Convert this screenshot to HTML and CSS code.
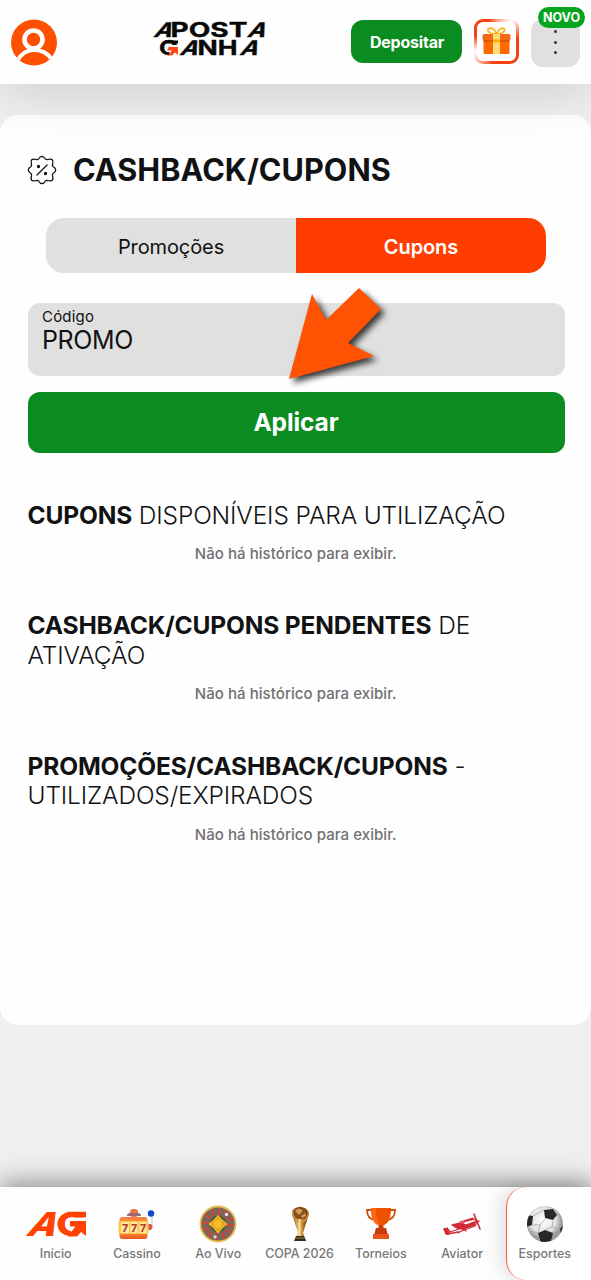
FILE: index.html
```html
<!DOCTYPE html>
<html lang="pt-BR">
<head>
<meta charset="utf-8">
<title>Cashback/Cupons</title>
<link rel="stylesheet" href="styles.css">
</head>
<body>
<div class="app">
  <header class="header">
    <svg class="avatar" viewBox="0 0 46 46" width="46" height="47">
      <defs><clipPath id="face"><circle cx="23" cy="23" r="23"/></clipPath></defs>
      <circle cx="23" cy="23" r="23" fill="#ff5000"/>
      <g clip-path="url(#face)" fill="none" stroke="#fff">
        <circle cx="22.5" cy="20" r="9" stroke-width="4.6"/>
        <path d="M6 42C13 27 32 27 41 40" stroke-width="4.2"/>
      </g>
    </svg>
    <svg class="brand" viewBox="0 0 114 38" width="114" height="38">
      <g font-family="Inter, sans-serif" font-weight="700" font-size="20" fill="#080808" stroke="#080808" stroke-width=".35">
        <text transform="matrix(1.2 0 -.46 1 1 16)">A</text>
        <text x="18.500" y="16" textLength="77" lengthAdjust="spacingAndGlyphs">POST</text>
        <text transform="matrix(1.2 0 -.46 1 94.5 16)">A</text>
        <text x="7" y="34.300" textLength="19" lengthAdjust="spacingAndGlyphs">G</text>
        <text transform="matrix(1.2 0 -.46 1 27 34.3)">A</text>
        <text x="45.500" y="34.300" textLength="40" lengthAdjust="spacingAndGlyphs">NH</text>
        <text transform="matrix(1.2 0 -.46 1 87 34.3)">A</text>
      </g>
      <path d="M17.500 24h8.500v12h-8.500z" fill="#fefefe"/>
      <path d="M13 19.500h13v3H13z" fill="#080808"/>
      <path d="M17 26h9v8l-3-2.500-3 3h-4l4-5h-5z" fill="#ff4a12"/>
    </svg>
    <div class="actions">
      <button class="deposit">Depositar</button>
      <div class="gift">
        <svg viewBox="0 0 39 39" width="39" height="39">
          <path d="M18.500 12C12 12 9 8 12 6.700S18 7 19.500 12C21 7 25 5.400 27 6.700S26 12 20.500 12" fill="none" stroke="#ffb31b" stroke-width="1.800"/>
          <rect x="6.500" y="16" width="26" height="16" rx="1.500" fill="#ff6a00"/>
          <rect x="5.500" y="12" width="28" height="6" rx="1.500" fill="#f36b14"/>
          <path d="M6.500 18h26v2h-26z" fill="#df5600"/>
          <path d="M16 12h7v20h-7z" fill="#ffdc78"/><path d="M16 17.500h7v3h-7z" fill="#ffb600"/>
        </svg>
      </div>
      <div class="more"><i></i><i></i><i></i><span class="novo">NOVO</span></div>
    </div>
  </header>

  <main class="card">
    <h1 class="title">
      <svg viewBox="0 0 30 30" width="30" height="30" fill="none" stroke="#111" stroke-width="1.300" stroke-linejoin="round" stroke-linecap="round">
        <path d="M15 1.300Q17 1.600 18.500 4Q19 4.800 20.500 4.500Q24 3.500 25.300 4.700Q26.500 6 25.500 9.500Q25.200 11 26 11.500Q28.700 13 28.700 15Q28.700 17 26 18.500Q25.200 19 25.500 20.500Q26.500 24 25.300 25.300Q24 26.500 20.500 25.500Q19 25.200 18.500 26Q17 28.700 15 28.700Q13 28.700 11.500 26Q11 25.200 9.500 25.500Q6 26.500 4.700 25.300Q3.500 24 4.500 20.500Q4.800 19 4 18.500Q1.300 17 1.300 15Q1.300 13 4 11.500Q4.800 11 4.500 9.500Q3.500 6 4.700 4.700Q6 3.500 9.500 4.500Q11 4.800 11.500 4Q13 1.300 15 1.300Z"/>
        <path d="M10 20l10-10"/><circle cx="11.500" cy="11.500" r="1" fill="#111"/><circle cx="18.500" cy="18.500" r="1" fill="#111"/>
      </svg>
      <span>CASHBACK/CUPONS</span>
    </h1>
    <div class="tabs"><button class="tab">Promoções</button><button class="tab active">Cupons</button></div>
    <div class="field">
      <label class="label">Código</label><div class="value">PROMO</div>
      <svg class="pointer" viewBox="0 0 110 110" width="110" height="110">
        <path d="M8 97L31 12 45 38 78 6 100 27 67 61 93 74Z" fill="#ff5203"/>
      </svg>
    </div>
    <button class="apply">Aplicar</button>
    <section class="group"><h2><b>CUPONS</b> DISPONÍVEIS PARA UTILIZAÇÃO</h2><p>Não há histórico para exibir.</p></section>
    <section class="group"><h2><b>CASHBACK/CUPONS PENDENTES</b> DE<br>ATIVAÇÃO</h2><p>Não há histórico para exibir.</p></section>
    <section class="group"><h2><b>PROMOÇÕES/CASHBACK/CUPONS</b> -<br>UTILIZADOS/EXPIRADOS</h2><p>Não há histórico para exibir.</p></section>
  </main>

  <nav class="nav">
    <a class="item">
      <svg class="mark" viewBox="0 0 62 38" width="62" height="38">
        <g font-family="Inter, sans-serif" font-weight="800" font-size="33" fill="#ff4202">
          <text transform="matrix(1.14 0 -.5 1 0 31)">A</text>
          <text x="31" y="31" textLength="31" lengthAdjust="spacingAndGlyphs">G</text>
        </g>
        <path d="M46 12.500h16V33H46z" fill="#fefefe"/>
        <path d="M42 6.800h19v5.500H42zM45 16h16v15l-5-4-4 4.500h-9.500l8-10H45z" fill="#ff4202"/>
      </svg><span>Início</span></a>
    <a class="item">
      <svg viewBox="0 0 38 38" width="38" height="38">
        <defs><linearGradient id="slot" x2="0" y2="1"><stop stop-color="#f47a3e"/><stop offset=".5" stop-color="#ffb640"/><stop offset="1" stop-color="#e95422"/></linearGradient></defs>
        <rect x="12" y="4" width="8" height="8" rx="3" fill="#ee7448"/><path d="M9 11q0-3 3-3h8q3 0 3 3z" fill="#9b6b78"/>
        <path d="M34 8v13l-4 3" stroke="#c9ccdd" stroke-width="1.300" fill="none"/><circle cx="33" cy="8.500" r="3.200" fill="#1447cf"/><path d="M30 19h3q3 3 0 6h-3z" fill="#e65545"/>
        <rect x="1.500" y="12" width="28" height="22" rx="3" fill="url(#slot)"/><rect x=".5" y="16" width="30" height="13" rx="2" fill="#ffc34a"/>
        <path d="M3 17h8v11H3zm9.500 0h7v11h-7zm9 0h7v11h-7z" fill="#ffe9a0"/>
        <g fill="#b5402b" font-family="Inter,sans-serif" font-size="10.500" font-weight="800"><text x="4" y="26.500">7</text><text x="13" y="26.500">7</text><text x="22" y="26.500">7</text></g>
      </svg><span>Cassino</span></a>
    <a class="item">
      <svg viewBox="0 0 38 38" width="38" height="38">
        <circle cx="19" cy="19" r="17.500" fill="#77675d" stroke="#e9b94d" stroke-width="1.800"/>
        <circle cx="19" cy="19" r="12" fill="none" stroke="#cf4538" stroke-width="7" stroke-dasharray="2.300 3.980"/>
        <circle cx="19" cy="19" r="8.500" fill="#466531"/><path d="M19 10.500l4 4.500 5 4-5 4-4 5-4-5-5-4 5-4z" fill="#eaa51d" stroke="#ffcb45"/><circle cx="19" cy="19" r="4" fill="#f7bd2c"/>
        <circle cx="27.500" cy="9.500" r="1.700" fill="#e9edf5"/><circle cx="16" cy="32" r="1.700" fill="#cbd7df"/>
      </svg><span>Ao Vivo</span></a>
    <a class="item">
      <svg viewBox="0 0 38 38" width="38" height="38">
        <defs><linearGradient id="gold"><stop stop-color="#713800"/><stop offset=".45" stop-color="#ffe09a"/><stop offset=".65" stop-color="#bd7b28"/><stop offset="1" stop-color="#4b2606"/></linearGradient></defs>
        <path d="M12 12C9 6 13 2 19 2s10 4 8 10l-5 16 3 8H14l3-8z" fill="url(#gold)"/><circle cx="19" cy="8" r="6.300" fill="#80501f"/><path d="M14 6q4-5 8 0l-4 4zM20 11l4-3 1 3-4 2z" fill="#d29a52"/><path d="M12 6q-2 6 6 11M27 6q2 7-7 12" stroke="#d0943a" fill="none" stroke-width="1.500"/><path d="M15 31h8l2 5H13z" fill="#2e301c"/><path d="M14 33h10" stroke="#b9762c"/>
      </svg><span>COPA 2026</span></a>
    <a class="item">
      <svg viewBox="0 0 38 38" width="38" height="38">
        <path d="M10 5H5q0 9 8 10M28 5h5q0 9-8 10" stroke="#d94b0b" stroke-width="1.800" fill="none"/><path d="M9 3h20c0 11-3 17-10 18C12 20 9 14 9 3z" fill="#ed5200"/><path d="M9 3h5c0 9 1 14 5 18C12 20 9 14 9 3z" fill="#ff6814"/><path d="M17 20h4l1 4h-6z" fill="#cf3e09"/><path d="M14 23h10l2 7H12z" fill="#c63c0d"/><path d="M11 29h16v5H11z" fill="#ea5518"/>
      </svg><span>Torneios</span></a>
    <a class="item">
      <svg viewBox="0 0 38 38" width="38" height="38" fill="none" stroke="#d02b36" stroke-width="1.300" stroke-linejoin="round" stroke-linecap="round">
        <path d="M1 24l3-1 3 4 9-3M4 29l12-2 16-6 2-5-3-2-8 2-5 3"/><path d="M1 24l2 5 3 0-2-5zM9 20l9-2 5 2 8-3 1 3-9 3-4 1-5-1z" fill="#d02b36"/><path d="M17 17l13-4M20 24l3 2M14 27l2 1"/><path d="M31 9l6 15" stroke-width="1.600"/><path d="M32 17l4-1"/>
      </svg><span>Aviator</span></a>
    <a class="item selected">
      <svg viewBox="0 0 38 38" width="38" height="38">
        <defs><radialGradient id="ball" cx=".45" cy=".4"><stop stop-color="#fff"/><stop offset=".7" stop-color="#e3e3e3"/><stop offset="1" stop-color="#9d9d9d"/></radialGradient><clipPath id="round"><circle cx="19" cy="19" r="18"/></clipPath></defs>
        <circle cx="19" cy="19" r="18" fill="url(#ball)"/>
        <g clip-path="url(#round)"><path d="M18 5l9-1 4 6-4 5-8-2zM0 10l7 1-1 9-6 2zM12 28l7-3 8 3-2 8-10 2zM34 24l5-6v12h-4z" fill="#282828"/><path d="M18 5L7 11M19 14l-5 6-8 0M27 16l-1 6 7 2M14 20l-2 8-8-2M26 22l-7 3M31 10l5 3M27 28l6-4" fill="none" stroke="#a5a5a5" stroke-width=".8"/></g>
      </svg><span>Esportes</span></a>
  </nav>
</div>
</body>
</html>
```
FILE: styles.css
```css
* { box-sizing: border-box; }
body { margin: 0; background: #efefef; font-family: Inter, sans-serif; color: #111214; }
button { border: 0; padding: 0; font: inherit; }
.app { height: 1280px; display: flex; flex-direction: column; overflow: hidden; }
.header { height: 84px; flex: none; display: flex; background: #fefefe; box-shadow: 0 4px 55px rgba(0, 0, 0, .16); padding: 0 11px; z-index: 1; }
.avatar { margin-top: 19px; flex: none; }
.brand { margin: 21px 0 0 95px; flex: none; overflow: visible; }
.mark { overflow: visible; }
.actions { margin-left: auto; display: flex; align-items: flex-start; }
.deposit { width: 111px; height: 43px; margin-top: 20px; border-radius: 12px; background: #0b8c20; color: #fff; font-weight: 700; font-size: 16px; letter-spacing: -.2px; padding-left: 1px; }
.gift { width: 45px; height: 45px; margin: 19px 12px 0 12px; padding: 3px; border-radius: 9px; background: conic-gradient(#ff9c80, #fff 35deg, #f5400f 80deg, #f5400f 170deg, #f5400f 190deg, #ffc1b0 225deg, #fff 245deg, #f5400f 285deg, #f5400f 340deg, #ff9c80); }
.gift svg { display: block; background: #fff; border-radius: 6px; }
.more { width: 49px; height: 48px; margin-top: 19px; border-radius: 12px; background: #e0e0e0; position: relative; display: flex; flex-direction: column; align-items: center; gap: 7.5px; padding-top: 11px; }
.more i { width: 3px; height: 3px; border-radius: 50%; background: #333; }
.novo { position: absolute; left: 7px; top: -12px; width: 47px; height: 21px; border-radius: 11px; background: #07a51e; color: #fff; font-size: 12.5px; line-height: 21px; font-weight: 700; text-align: center; }
.card { height: 910px; margin-top: 31px; flex: none; padding: 40px 26px 0 28px; border-radius: 18px; background: #fefefe; }
.title { display: flex; align-items: center; gap: 16px; margin: 0 0 33px -1px; height: 30px; font-size: 30.6px; letter-spacing: .05px; line-height: 30px; font-weight: 700; white-space: nowrap; }
.tabs { display: flex; height: 55px; width: 500px; margin: 0 0 30px 18px; border-radius: 18px; overflow: hidden; }
.tab { flex: 1; background: #e0e0e0; font-size: 20px; letter-spacing: -.1px; color: #111; padding-top: 2px; }
.tab.active { background: #ff3d00; color: #fff; font-weight: 600; }
.field { position: relative; height: 73px; border-radius: 12px; background: #e0e0e0; padding: 4px 14px; }
.label { display: block; font-size: 15px; line-height: 19px; letter-spacing: .2px; }
.value { font-size: 25px; line-height: 29px; letter-spacing: -.4px; }
.pointer { position: absolute; left: 253px; top: -21px; filter: drop-shadow(4px 4px 3px rgba(0, 0, 0, .75)); }
.apply { display: block; width: 100%; height: 61px; margin: 15.500px 0 48.500px; border-radius: 12px; background: #0b8c20; color: #fff; font-size: 24.500px; letter-spacing: -.1px; font-weight: 700; padding-right: 1px; }
.group { margin: 0 0 48.300px -.500px; }
.group h2 { margin: 0; font-size: 24.5px; line-height: 29.3px; font-weight: 300; letter-spacing: -.15px; white-space: nowrap; }
.group b { font-weight: 700; }
.group p { margin: 13.800px 0 0 -1px; font-size: 15px; line-height: 19px; letter-spacing: .06px; text-align: center; color: #707070; font-weight: 500; }
.group + .group p { margin-top: 14.500px; }
.nav { height: 93px; margin-top: auto; flex: none; display: flex; padding-left: 15px; background: #fefefe; box-shadow: 0 -4px 24px rgba(0, 0, 0, .42); }
.item { width: 81.3px; flex: none; display: flex; flex-direction: column; align-items: center; padding-top: 18px; color: #777; font-size: 12.4px; line-height: 16px; font-weight: 500; white-space: nowrap; }
.item svg { display: block; margin-bottom: 3px; }
.selected { width: 100px; margin-left: 3px; padding-right: 23px; border-left: 1.500px solid #ff5a27; border-radius: 20px; background: #fff; box-shadow: -5px 0 20px rgba(0, 0, 0, .13); }
```
